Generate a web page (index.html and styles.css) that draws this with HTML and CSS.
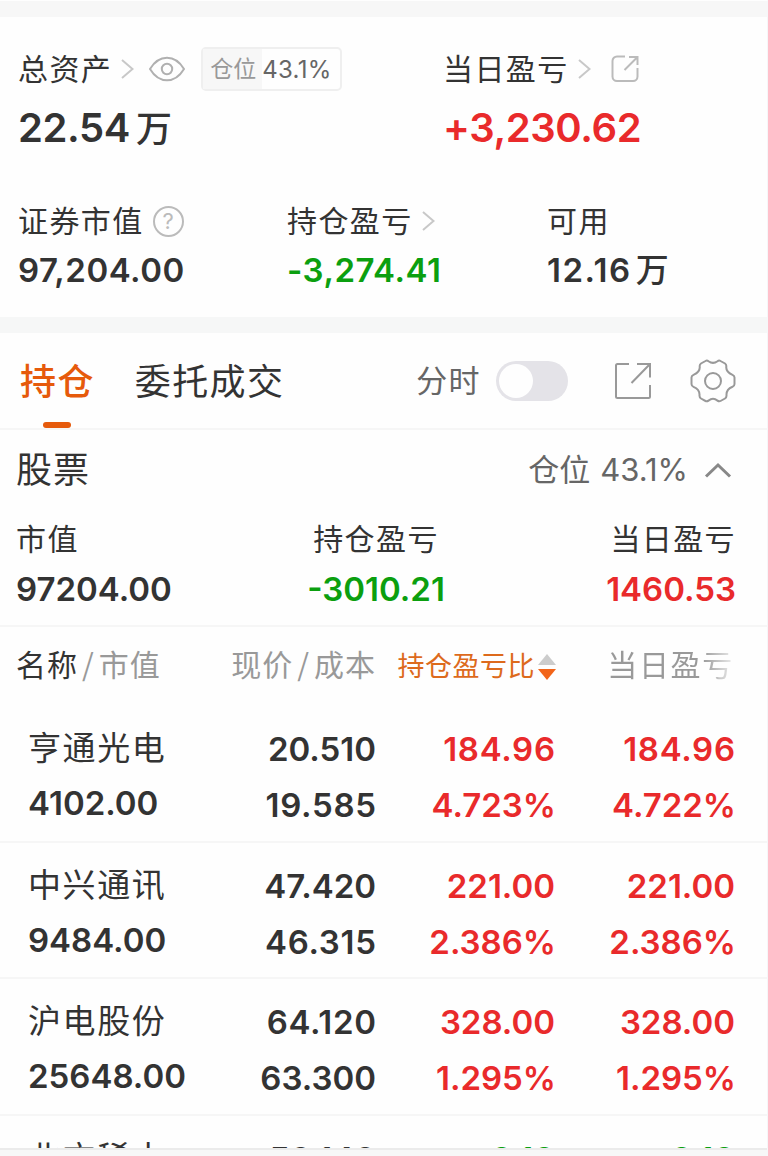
FILE: index.html
```html
<!DOCTYPE html>
<html lang="zh-CN">
<head>
    <meta charset="UTF-8">
    <meta name="viewport" content="width=device-width, initial-scale=1.0">
    <title>持仓</title>
    <link rel="stylesheet" href="styles.css">
</head>
<body>
    <div class="page">
        <section class="summary">
            <div class="summary-top">
                <div>
                    <div class="label label-top">
                        <span class="text">总资产</span>
                        <svg class="arrow" width="13" height="20" viewBox="0 0 13 20"><path d="M1 1l10.500 9L1 19"/></svg>
                        <svg class="eye" width="36" height="26" viewBox="0 0 36 26"><path d="M1 13C10-2 26-2 35 13C26 28 10 28 1 13z"/><circle cx="18" cy="13" r="5.200"/></svg>
                        <span class="badge"><span class="badge-name">仓位</span><span class="badge-value">43.1%</span></span>
                    </div>
                    <div class="total">22.54<span class="wan">万</span></div>
                </div>
                <div>
                    <div class="label label-top">
                        <span class="text">当日盈亏</span>
                        <svg class="arrow" width="13" height="20" viewBox="0 0 13 20"><path d="M1 1l10.500 9L1 19"/></svg>
                        <svg class="share-small" width="28" height="28" viewBox="0 0 28 28"><path d="M14 1.500H6A4.500 4.500 0 0 0 1.500 6v15.500A4.500 4.500 0 0 0 6 26h16a4.500 4.500 0 0 0 4.500-4.500V13M18 2h8.500v8M26 2.500L13.500 15"/></svg>
                    </div>
                    <div class="total red">+3,230.62</div>
                </div>
            </div>
            <div class="summary-bottom">
                <div>
                    <div class="label"><span class="text">证券市值</span>
                        <span class="help">?</span>
                    </div>
                    <div class="value">97,204.00</div>
                </div>
                <div>
                    <div class="label"><span class="text">持仓盈亏</span>
                        <svg class="arrow" width="13" height="20" viewBox="0 0 13 20"><path d="M1 1l10.500 9L1 19"/></svg>
                    </div>
                    <div class="value green">-3,274.41</div>
                </div>
                <div>
                    <div class="label"><span class="text">可用</span></div>
                    <div class="value avail">12.16<span class="wan">万</span></div>
                </div>
            </div>
        </section>

        <nav class="tabs">
            <div class="tab active">持仓</div>
            <div class="tab">委托成交</div>
            <div class="tools">
                <span class="tool-label">分时</span>
                <span class="switch"></span>
                <svg class="share" width="38" height="38" viewBox="0 0 38 38"><path d="M15 2H3.500A1.500 1.500 0 0 0 2 3.500v31A1.500 1.500 0 0 0 3.500 36h31a1.500 1.500 0 0 0 1.500-1.500V23M23 2h13v13.500M36 2L17.500 21"/></svg>
                <svg class="gear" width="46" height="44" viewBox="0 0 46 44"><path d="M15.500 2Q17 1 18.500 2.200Q23 5.600 27.500 2.200Q29 1 30.500 2L35 4.500Q36.500 5.500 36.300 7.500Q35.700 13 42.500 15.800Q44.500 16.700 44.500 18.500V25Q44.500 27 42.500 27.800Q36 30.500 36.500 36.500Q36.600 38.400 35 39.500L30.500 42Q29 42.800 27.500 41.600Q23 38 18.500 41.600Q17 42.800 15.500 42L11 39.500Q9.400 38.400 9.500 36.500Q10 30.500 3.500 27.800Q1.500 27 1.500 25V18.500Q1.500 16.700 3.500 15.800Q10.300 13 9.700 7.500Q9.500 5.500 11 4.500z"/><circle cx="23" cy="22" r="8"/></svg>
            </div>
        </nav>

        <section class="stock">
            <div class="stock-head">
                <h2>股票</h2>
                <div class="position">仓位 <span>43.1%</span>
                    <svg width="28" height="18" viewBox="0 0 28 18"><path d="M2 15.500L14 4l12 11.500"/></svg>
                </div>
            </div>
            <div class="stock-sum">
                <div>
                    <div class="label"><span class="text">市值</span></div>
                    <div class="value">97204.00</div>
                </div>
                <div class="center">
                    <div class="label"><span class="text">持仓盈亏</span></div>
                    <div class="value green">-3010.21</div>
                </div>
                <div class="right">
                    <div class="label"><span class="text">当日盈亏</span></div>
                    <div class="value red">1460.53</div>
                </div>
            </div>
        </section>

        <section class="table">
            <div class="thead">
                <div class="th"><b>名称</b><i>/</i>市值</div>
                <div class="th right">现价<i>/</i>成本</div>
                <div class="th sort">持仓盈亏比<svg width="18" height="26" viewBox="0 0 18 26"><path class="up" d="M9 0l9 11H0z"/><path class="down" d="M9 26l9-11H0z"/></svg></div>
                <div class="th right"><span class="fade">当日盈亏</span></div>
            </div>
            <div class="row">
                <div class="name"><span>亨通光电</span><span class="num">4102.00</span></div>
                <div class="cell">20.510<br><span class="wide">19.585</span></div>
                <div class="cell red"><span class="wide">184.96</span><br><span class="pct">4.723%</span></div>
                <div class="cell red"><span class="wide">184.96</span><br><span class="pct">4.722%</span></div>
            </div>
            <div class="row">
                <div class="name"><span>中兴通讯</span><span class="num">9484.00</span></div>
                <div class="cell">47.420<br><span class="wide">46.315</span></div>
                <div class="cell red">221.00<br><span class="pct">2.386%</span></div>
                <div class="cell red">221.00<br><span class="pct">2.386%</span></div>
            </div>
            <div class="row">
                <div class="name"><span>沪电股份</span><span class="num">25648.00</span></div>
                <div class="cell"><span class="wide">64.120</span><br>63.300</div>
                <div class="cell red">328.00<br><span class="pct">1.295%</span></div>
                <div class="cell red">328.00<br><span class="pct">1.295%</span></div>
            </div>
            <div class="row last">
                <div class="name"><span>北方稀土</span></div>
                <div class="cell">50.140</div>
                <div class="cell green">0.10</div>
                <div class="cell green">0.10</div>
            </div>
        </section>
        <div class="bottom-bar"></div>
    </div>
</body>
</html>
```

FILE: styles.css
```css
* {
    box-sizing: border-box;
}
body {
    margin: 0;
    background: #fefefe;
    color: #333;
    font-family: Inter, "Noto Sans CJK SC", sans-serif;
}
.page {
    width: 768px;
    height: 1156px;
    overflow: hidden;
    border-top: 1px solid #fefefe;
    border-right: 1px solid #f6f6f8;
}
svg {
    fill: none;
    stroke: #bbb;
    stroke-width: 2;
    flex-shrink: 0;
}
.red {
    color: #e92a2b;
}
.green {
    color: #0b9f0f;
}
.summary {
    height: 332px;
    border-top: 16px solid #f7f7f7;
    border-bottom: 16px solid #f6f7f7;
    padding: 30px 0 0 18px;
}
.summary-top {
    display: grid;
    grid-template-columns: 425px 1fr;
    height: 150px;
}
.summary-bottom {
    display: grid;
    grid-template-columns: 269px 260px 1fr;
}
.label {
    display: flex;
    align-items: center;
    height: 48px;
    font-size: 30px;
    letter-spacing: 1.4px;
    white-space: nowrap;
}
.label-top {
    height: 44px;
}
.text {
    padding-bottom: 4px;
}
.label-top .text {
    padding-bottom: 5px;
}
.arrow {
    margin-left: 9px;
    stroke: #c8c8c8;
}
.eye {
    margin-left: 15px;
    stroke: #b0b0b0;
}
.share-small {
    margin-left: 20px;
}
.badge {
    display: flex;
    width: 141px;
    height: 44px;
    margin-left: 16px;
    border: 2px solid #efefef;
    border-radius: 5px;
    font-size: 23px;
    line-height: 41px;
    letter-spacing: 0;
}
.badge-name {
    width: 59px;
    padding-left: 7px;
    background: #f7f7f7;
    color: #999;
}
.badge-value {
    font-size: 24px;
    color: #666;
    letter-spacing: 0.3px;
}
.total {
    height: 74px;
    font-size: 40px;
    font-weight: 600;
    line-height: 73px;
    letter-spacing: -0.4px;
}
.wan {
    margin-left: 6px;
    font-size: 36px;
    font-weight: 500;
    letter-spacing: 0;
}
.value {
    height: 50px;
    font-size: 33px;
    font-weight: 600;
    line-height: 50px;
}
.summary-bottom .value {
    letter-spacing: 0.5px;
}
.summary-bottom .avail {
    letter-spacing: 1.5px;
}
.avail .wan {
    margin-left: 4px;
    font-size: 33px;
}
.help {
    width: 31px;
    height: 31px;
    margin-left: 9px;
    border: 2px solid #bbb;
    border-radius: 50%;
    color: #bbb;
    font-size: 22px;
    line-height: 27px;
    letter-spacing: 0;
    text-align: center;
}
.tabs {
    display: flex;
    height: 97px;
    padding-left: 20px;
    border-bottom: 2px solid #f6f6f6;
    font-size: 36px;
    line-height: 98px;
    letter-spacing: 1.4px;
}
.tab {
    position: relative;
    margin-right: 40px;
}
.tab.active {
    color: #e65a0b;
    font-weight: 500;
}
.tab.active::after {
    content: "";
    position: absolute;
    left: 23px;
    bottom: 0;
    width: 28px;
    height: 6px;
    border-radius: 3px;
    background: #e65a0b;
}
.tools {
    display: flex;
    align-items: center;
    margin-left: auto;
    padding-right: 31px;
    color: #666;
}
.tool-label {
    font-size: 31px;
}
.switch {
    width: 72px;
    height: 40px;
    margin-left: 15px;
    padding: 3px;
    border-radius: 20px;
    background: #e4e3e8;
}
.switch::before {
    content: "";
    display: block;
    width: 34px;
    height: 34px;
    border-radius: 50%;
    background: #fefefe;
}
.share {
    margin-left: 46px;
    stroke: #999;
}
.gear {
    margin-left: 38px;
    stroke: #999;
}
.stock {
    height: 197px;
    padding: 0 31px 0 16px;
    border-bottom: 2px solid #f6f6f6;
}
.stock-head {
    display: flex;
    justify-content: space-between;
    height: 85px;
    line-height: 80px;
}
.stock-head h2 {
    margin: 0;
    font-size: 36px;
    font-weight: 400;
    letter-spacing: 1px;
}
.position {
    display: flex;
    align-items: center;
    height: 80px;
    padding-right: 4px;
    color: #666;
    font-size: 31px;
}
.position span {
    margin-left: 10px;
}
.position svg {
    margin-left: 16px;
    stroke: #888;
    stroke-width: 3;
}
.stock-sum {
    display: grid;
    grid-template-columns: 1fr 1fr 1fr;
}
.stock-sum .value {
    line-height: 52px;
}
.center {
    text-align: center;
}
.center .label {
    justify-content: center;
}
.right {
    text-align: right;
}
.right .label {
    justify-content: flex-end;
}
.thead {
    display: grid;
    grid-template-columns: 200px 160px 180px 1fr;
    height: 79px;
    padding: 0 33px 0 16px;
    color: #999;
    font-size: 30px;
    line-height: 77px;
    letter-spacing: 1px;
    white-space: nowrap;
}
.th b {
    color: #333;
    font-weight: 400;
}
.th i {
    padding: 0 4px;
    font-family: "Noto Sans CJK SC", sans-serif;
    font-style: normal;
    line-height: 1;
}
.th.sort {
    display: flex;
    align-items: center;
    justify-content: flex-end;
    gap: 3px;
    color: #dd6a1c;
    font-size: 27px;
    letter-spacing: 0.5px;
}
.th svg {
    stroke: none;
}
.up {
    fill: #ccc;
}
.down {
    fill: #f26419;
}
.fade {
    background: linear-gradient(90deg, #999 75%, #eee 100%);
    -webkit-background-clip: text;
    background-clip: text;
    color: transparent;
    letter-spacing: 1.7px;
}
.row {
    display: grid;
    grid-template-columns: 200px 148px 179px 180px;
    height: 136.500px;
    padding: 15px 0 0 28px;
    border-bottom: 2px solid #f6f6f6;
}
.name {
    display: flex;
    flex-direction: column;
    font-size: 33px;
    line-height: 55px;
    letter-spacing: 1.6px;
}
.num {
    font-weight: 600;
    letter-spacing: 0;
}
.cell {
    font-size: 33px;
    font-weight: 600;
    line-height: 56px;
    text-align: right;
}
.wide {
    margin-right: -0.700px;
    letter-spacing: 0.7px;
}
.pct {
    margin-right: -1px;
}
/* next holding, only its top edge is scrolled into view */
.row.last {
    height: 32px;
    padding-top: 15px;
    border-bottom: 0;
    overflow: hidden;
}
.bottom-bar {
    height: 10px;
    border-top: 2px solid #ebebeb;
    background: #f7f7f7;
}
```
